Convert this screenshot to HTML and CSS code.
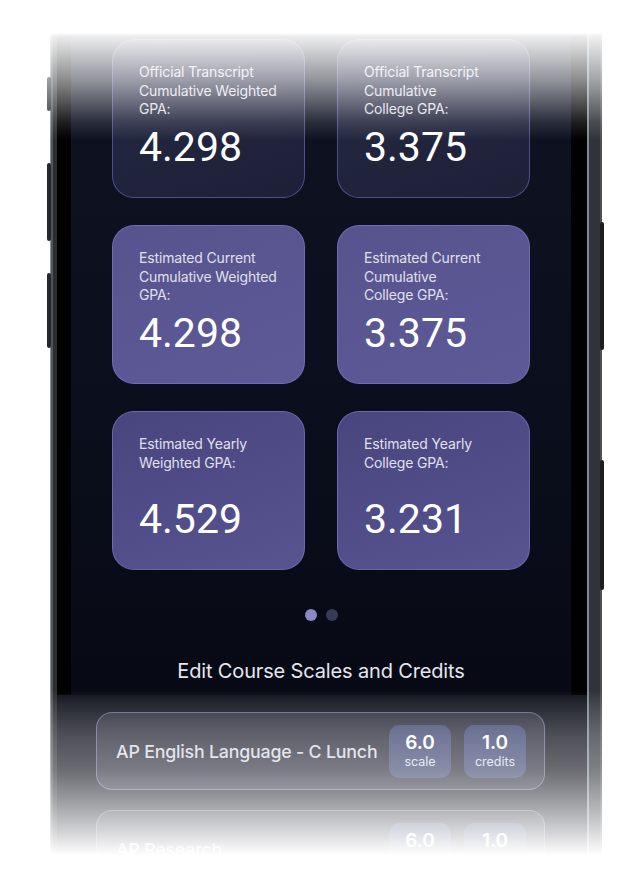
FILE: index.html
```html
<!DOCTYPE html>
<html lang="en">
<head>
<meta charset="utf-8">
<title>GPA</title>
<link rel="stylesheet" href="styles.css">
</head>
<body>
<div class="stage">
  <div class="phone">
    <span class="btn btn-l1"></span>
    <span class="btn btn-l2"></span>
    <span class="btn btn-l3"></span>
    <span class="btn btn-r1"></span>
    <span class="btn btn-r2"></span>
    <div class="bezel">
      <div class="screen">
        <div class="grid">
          <div class="card glass">
            <div class="label">Official Transcript<br>Cumulative Weighted<br>GPA:</div>
            <div class="value">4.298</div>
          </div>
          <div class="card glass">
            <div class="label">Official Transcript<br>Cumulative<br>College GPA:</div>
            <div class="value">3.375</div>
          </div>
          <div class="card solid">
            <div class="label">Estimated Current<br>Cumulative Weighted<br>GPA:</div>
            <div class="value">4.298</div>
          </div>
          <div class="card solid">
            <div class="label">Estimated Current<br>Cumulative<br>College GPA:</div>
            <div class="value">3.375</div>
          </div>
          <div class="card deep">
            <div class="label">Estimated Yearly<br>Weighted GPA:</div>
            <div class="value">4.529</div>
          </div>
          <div class="card deep">
            <div class="label">Estimated Yearly<br>College GPA:</div>
            <div class="value">3.231</div>
          </div>
        </div>
        <div class="dots"><span class="dot on"></span><span class="dot"></span></div>
        <div class="edit">Edit Course Scales and Credits</div>
      </div>
    </div>
    <div class="lower">
      <div class="course">
        <div class="course-name">AP English Language - C Lunch</div>
        <div class="badge"><span class="num">6.0</span><span class="unit">scale</span></div>
        <div class="badge"><span class="num">1.0</span><span class="unit">credits</span></div>
      </div>
      <div class="course">
        <div class="course-name">AP Research</div>
        <div class="badge"><span class="num">6.0</span><span class="unit">scale</span></div>
        <div class="badge"><span class="num">1.0</span><span class="unit">credits</span></div>
      </div>
    </div>
  </div>
  <div class="fade-top"></div>
  <div class="fade-bottom"></div>
</div>
</body>
</html>
```
FILE: styles.css
```css
html, body {
  margin: 0;
  padding: 0;
  background: #ffffff;
}
body {
  width: 640px;
  height: 886px;
  overflow: hidden;
  font-family: Inter, "Noto Sans", sans-serif;
}
.stage {
  position: relative;
  width: 640px;
  height: 886px;
  overflow: hidden;
  background: #ffffff;
}
.phone {
  position: relative;
  margin: 33px 0 0 50px;
  width: 552px;
  height: 822px;
  box-sizing: border-box;
  padding: 0 15px 0 7px;
  display: flex;
  flex-direction: column;
  background: linear-gradient(to right,
    #8c929a 0px, #8c929a 1px,
    #50555c 1px, #50555c 3px,
    #2a2d32 3px, #2a2d32 537px,
    #7e8a98 537px, #7e8a98 539px,
    #30343a 539px, #30343a 550px,
    #4c5057 550px, #4c5057 552px);
}
.btn {
  position: absolute;
  width: 4px;
  background: #24272c;
  border-radius: 2px;
}
.btn-l1 { left: -3px; top: 44px; height: 34px; }
.btn-l2 { left: -3px; top: 130px; height: 78px; }
.btn-l3 { left: -3px; top: 240px; height: 75px; }
.btn-r1 { right: -2px; top: 189px; height: 128px; background: #1c1e22; }
.btn-r2 { right: -2px; top: 427px; height: 130px; background: #1c1e22; }

.bezel {
  height: 662px;
  background: #000;
  padding: 0 16px 0 14px;
}
.screen {
  height: 662px;
  background: linear-gradient(to bottom, #0e1222 0%, #0b0f1d 55%, #070a14 100%);
  padding: 6px 41px 0 41px;
  box-sizing: border-box;
  color: #fff;
}
.grid {
  display: grid;
  grid-template-columns: 193px 193px;
  column-gap: 32px;
  row-gap: 27px;
}
.card {
  height: 159px;
  box-sizing: border-box;
  border-radius: 22px;
  padding: 23px 18px 0 26px;
  border: 1px solid rgba(130, 128, 205, 0.55);
}
.glass {
  background: linear-gradient(160deg, rgba(70, 72, 110, 0.45), rgba(60, 62, 100, 0.35));
  border-color: rgba(110, 108, 190, 0.6);
}
.solid {
  background: linear-gradient(160deg, #56538e 0%, #5a5794 60%, #5c5996 100%);
}
.deep {
  background: linear-gradient(160deg, #48457e 0%, #4f4c88 50%, #57548f 100%);
}
.label {
  height: 57px;
  font-size: 14px;
  line-height: 18.5px;
  color: #e0e0ea;
  letter-spacing: -0.15px;
}
.value {
  margin-top: 4px;
  font-family: Roboto, "Liberation Sans", sans-serif;
  font-size: 41px;
  line-height: 46px;
  font-weight: 400;
  color: #ffffff;
}
.dots {
  margin-top: 39px;
  display: flex;
  justify-content: center;
  gap: 9px;
}
.dot {
  width: 12px;
  height: 12px;
  border-radius: 50%;
  background: #383a5a;
}
.dot.on {
  background: #8a88c6;
}
.edit {
  margin-top: 38px;
  text-align: center;
  font-size: 20px;
  line-height: 24px;
  color: #e6e6ee;
  letter-spacing: -0.15px;
}

.lower {
  flex: 1;
  background: #10121c;
  padding: 17px 42px 0 39px;
  display: flex;
  flex-direction: column;
  gap: 20px;
}
.course {
  height: 78px;
  flex: none;
  box-sizing: border-box;
  border-radius: 16px;
  border: 1px solid rgba(150, 150, 205, 0.55);
  background: rgba(66, 68, 86, 0.5);
  display: flex;
  align-items: center;
  padding: 0 18px 0 19px;
}
.course-name {
  flex: 1;
  min-width: 0;
  white-space: nowrap;
  font-size: 17.8px;
  font-weight: 500;
  color: #d8d8e0;
  letter-spacing: -0.2px;
}
.badge {
  width: 62px;
  height: 53px;
  flex: none;
  margin-left: 13px;
  border-radius: 10px;
  background: #3f4872;
  display: flex;
  flex-direction: column;
  align-items: center;
  justify-content: center;
  color: #fff;
}
.badge:first-of-type { margin-left: 6px; }
.num {
  font-size: 19px;
  font-weight: 600;
  line-height: 22px;
}
.unit {
  font-size: 12.5px;
  line-height: 16px;
  color: #dfe0ea;
}

.fade-top {
  position: absolute;
  left: 0;
  top: 0;
  width: 640px;
  height: 160px;
  background: linear-gradient(to bottom,
    rgba(255,255,255,1) 0px,
    rgba(255,255,255,1) 33px,
    rgba(255,255,255,0.93) 36px,
    rgba(255,255,255,0.72) 60px,
    rgba(255,255,255,0.55) 80px,
    rgba(255,255,255,0.35) 100px,
    rgba(255,255,255,0.12) 122px,
    rgba(255,255,255,0) 140px);
  pointer-events: none;
}
.fade-bottom {
  position: absolute;
  left: 0;
  top: 690px;
  width: 640px;
  height: 196px;
  background: linear-gradient(to bottom,
    rgba(255,255,255,0) 0px,
    rgba(255,255,255,0.1) 15px,
    rgba(255,255,255,0.26) 45px,
    rgba(255,255,255,0.38) 80px,
    rgba(255,255,255,0.58) 110px,
    rgba(255,255,255,0.8) 140px,
    rgba(255,255,255,1) 165px,
    rgba(255,255,255,1) 196px);
  pointer-events: none;
}
```
